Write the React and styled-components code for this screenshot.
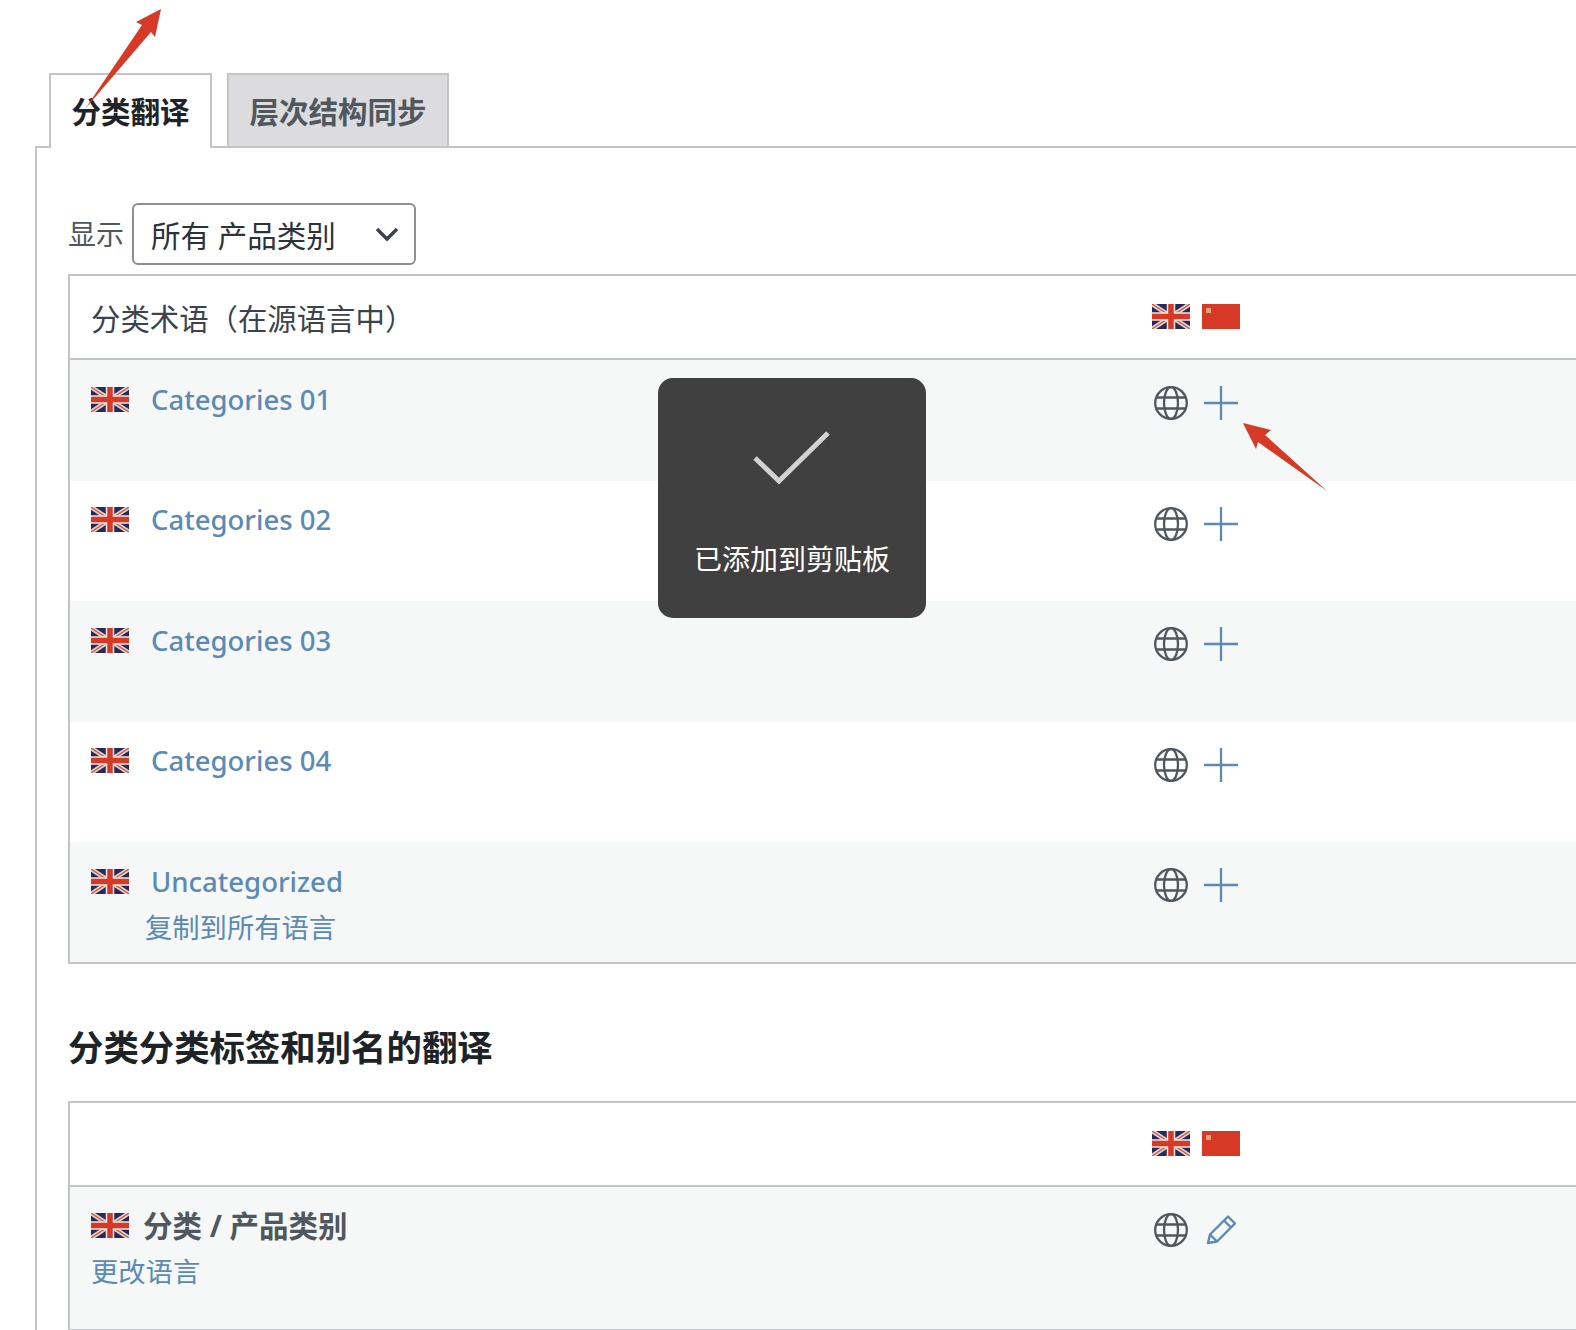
import React from "react";
import styled, { createGlobalStyle } from "styled-components";

const CJK = `"Noto Sans", "Noto Sans CJK SC", sans-serif`;
const LINK = "#5b8ab5";
const BORDER = "#c3c4c7";

const Global = createGlobalStyle`
  html, body {
    margin: 0;
    height: 1330px;
    overflow: hidden;
    background: #fff;
    font-family: ${CJK};
  }
  * { box-sizing: border-box; }
`;

const Page = styled.div`
  position: relative;
  width: 1576px;
  height: 1330px;
  overflow: hidden;
  padding: 73px 0 0 35px;
`;
const Tabs = styled.div`
  display: flex;
  gap: 15px;
  padding-left: 14px;
  margin-bottom: -2px;
  position: relative;
  z-index: 1;
`;
const Tab = styled.div`
  height: 75px;
  width: ${({ $w }) => $w}px;
  border: 2px solid ${BORDER};
  border-bottom: ${({ $active }) => ($active ? "none" : `2px solid ${BORDER}`)};
  background: ${({ $active }) => ($active ? "#fff" : "#dcdcde")};
  color: ${({ $active }) => ($active ? "#1d2327" : "#50575e")};
  font-size: 29.5px;
  font-weight: 700;
  line-height: 74px;
  text-align: center;
`;
const Panel = styled.div`
  border-top: 2px solid ${BORDER};
  border-left: 2px solid ${BORDER};
  padding: 55px 0 0 31px;
  height: 1200px;
`;
const FilterRow = styled.div`
  display: flex;
  align-items: center;
  gap: 8px;
  height: 62px;
  margin-bottom: 9px;
`;
const FilterLabel = styled.span`
  font-size: 28px;
  color: #50575e;
  line-height: 40px;
`;
const Select = styled.div`
  width: 284px;
  height: 62px;
  border: 2px solid #8c8f94;
  border-radius: 6px;
  display: flex;
  align-items: center;
  justify-content: space-between;
  padding: 0 15px 0 17px;
  font-size: 29.5px;
  color: #2c3338;
`;
const Table = styled.div`
  border: 2px solid ${BORDER};
  border-right: none;
`;
const Grid = styled.div`
  display: grid;
  grid-template-columns: 1061px 1fr;
  padding-left: 21px;
`;
const Head = styled(Grid)`
  height: 84px;
  align-items: center;
  border-bottom: 2px solid ${BORDER};
  font-size: 29.4px;
  color: #3c434a;
`;
const Row = styled(Grid)`
  height: ${({ $h }) => $h}px;
  padding-top: ${({ $top }) => $top}px;
  background: ${({ $odd }) => ($odd ? "#f6f7f7" : "#fff")};
`;
const Flags = styled.div`
  display: flex;
  gap: 12px;
  margin-top: -2px;
`;
const Name = styled.div`
  display: flex;
  align-items: center;
  height: 26px;
  gap: ${({ $gap }) => $gap}px;
`;
const TermLink = styled.a`
  font-size: 27.5px;
  font-weight: 500;
  color: ${LINK};
  white-space: nowrap;
`;
const TermTitle = styled.span`
  font-size: 29.5px;
  font-weight: 700;
  color: #50575e;
  white-space: nowrap;
  margin-top: -2px;
`;
const SubLink = styled.a`
  display: block;
  font-size: 27.3px;
  line-height: 40px;
  color: ${LINK};
  margin: 14px 0 0 ${({ $indent }) => $indent}px;
`;
const Actions = styled.div`
  display: flex;
  align-items: center;
  gap: 16px;
  padding-left: 2px;
  height: 34px;
  margin-top: ${({ $top }) => $top || 0}px;
`;
const Heading = styled.h2`
  margin: 57px 0 28px;
  font-size: 35.4px;
  line-height: 52px;
  font-weight: 700;
  color: #1d2327;
`;
const Toast = styled.div`
  position: absolute;
  left: 658px;
  top: 378px;
  width: 268px;
  height: 240px;
  border-radius: 15px;
  background: #404040;
  display: flex;
  flex-direction: column;
  align-items: center;
  padding-top: 52px;
  z-index: 5;
`;
const ToastCheck = styled.svg`
  margin-right: 4px;
`;
const ToastText = styled.div`
  margin-top: 52px;
  font-size: 28px;
  line-height: 42px;
  font-weight: 400;
  color: #fff;
  white-space: nowrap;
`;
const Overlay = styled.svg`
  position: absolute;
  left: 0;
  top: 0;
  z-index: 6;
  pointer-events: none;
`;
const FlagSvg = styled.svg`
  display: block;
  flex: none;
  filter: blur(0.5px);
`;

const UkFlag = () => (
  <FlagSvg width="38" height="25" viewBox="0 0 38 25">
    <rect width="38" height="25" fill="#28285c" />
    <path d="M0 0L38 25M38 0L0 25" stroke="#e0d2cc" strokeWidth="4.5" />
    <path d="M0 0L38 25M38 0L0 25" stroke="#c9593f" strokeWidth="1.2" />
    <path d="M19 0V25M0 12.5H38" stroke="#efe6e2" strokeWidth="8.5" />
    <path d="M19 0V25M0 12.5H38" stroke="#d63a27" strokeWidth="5.5" />
  </FlagSvg>
);

const CnFlag = () => (
  <FlagSvg width="38" height="25" viewBox="0 0 38 25">
    <rect width="38" height="25" fill="#d63a27" />
    <rect x="4" y="4" width="5" height="5" fill="#dfa27c" />
  </FlagSvg>
);

const Globe = () => (
  <svg width="34" height="34" viewBox="0 0 34 34" fill="none" stroke="#50575e" strokeWidth="2.3">
    <circle cx="17" cy="17" r="15.8" />
    <ellipse cx="17" cy="17" rx="7" ry="15.8" />
    <path d="M3 11.5H31M3 22.5H31" />
  </svg>
);

const Plus = () => (
  <svg width="34" height="34" viewBox="0 0 34 34" stroke={LINK} strokeWidth="2.3">
    <path d="M17 0V34M0 17H34" />
  </svg>
);

const Pencil = () => (
  <svg width="34" height="34" viewBox="0 0 34 34" fill="none" stroke={LINK} strokeWidth="2.4" strokeLinejoin="round">
    <path d="M4 30L6 21.5L24 3.5L31 10.5L13 28.5Z" />
    <path d="M20 7.5L27 14.5M6 21.5L13 28.5" />
  </svg>
);

const Chevron = () => (
  <svg width="24" height="16" viewBox="0 0 24 16" fill="none" stroke="#3c434a" strokeWidth="3.4">
    <path d="M2 3L12 13L22 3" />
  </svg>
);

const terms = ["Categories 01", "Categories 02", "Categories 03", "Categories 04"];

export default function App() {
  return (
    <Page>
      <Global />
      <Tabs>
        <Tab $active $w={163}>分类翻译</Tab>
        <Tab $w={222}>层次结构同步</Tab>
      </Tabs>
      <Panel>
        <FilterRow>
          <FilterLabel>显示</FilterLabel>
          <Select>
            <span>所有 产品类别</span>
            <Chevron />
          </Select>
        </FilterRow>
        <Table>
          <Head>
            <span>分类术语（在源语言中）</span>
            <Flags><UkFlag /><CnFlag /></Flags>
          </Head>
          {terms.map((t, i) => (
            <Row key={t} $odd={i % 2 === 0} $h={120.5} $top={26}>
              <Name $gap={22}><UkFlag /><TermLink>{t}</TermLink></Name>
              <Actions><Globe /><Plus /></Actions>
            </Row>
          ))}
          <Row $odd $h={120} $top={26}>
            <div>
              <Name $gap={22}><UkFlag /><TermLink>Uncategorized</TermLink></Name>
              <SubLink $indent={54}>复制到所有语言</SubLink>
            </div>
            <Actions><Globe /><Plus /></Actions>
          </Row>
        </Table>
        <Heading>分类分类标签和别名的翻译</Heading>
        <Table>
          <Head>
            <span />
            <Flags><UkFlag /><CnFlag /></Flags>
          </Head>
          <Row $odd $h={142} $top={25}>
            <div>
              <Name $gap={14}><UkFlag /><TermTitle>分类 / 产品类别</TermTitle></Name>
              <SubLink $indent={0}>更改语言</SubLink>
            </div>
            <Actions $top={1}><Globe /><Pencil /></Actions>
          </Row>
        </Table>
      </Panel>
      <Toast>
        <ToastCheck width="80" height="56" viewBox="0 0 80 56" fill="none" stroke="#d2d2d4" strokeWidth="5">
          <path d="M5 28L29 51L78 3" />
        </ToastCheck>
        <ToastText>已添加到剪贴板</ToastText>
      </Toast>
      <Overlay width="1576" height="1330" viewBox="0 0 1576 1330">
        <polygon points="161,9 136,22 142,25 85,109 151,32 155,37" fill="#d63a27" />
        <polygon points="1243,423 1271,430 1265,435 1327,491 1258,442 1256,449" fill="#d63a27" />
      </Overlay>
    </Page>
  );
}
